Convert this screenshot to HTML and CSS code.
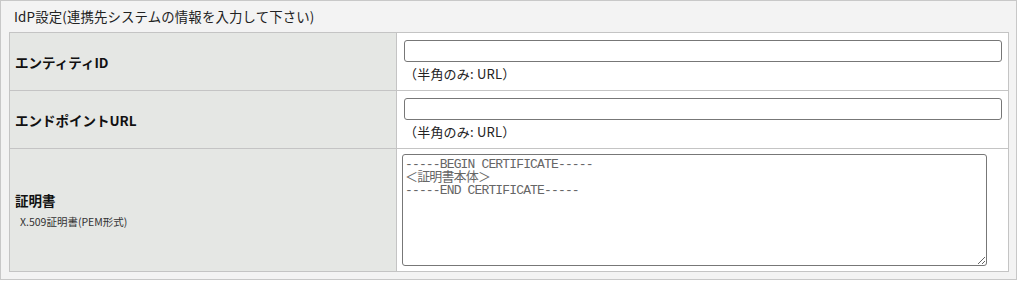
FILE: index.html
```html
<!DOCTYPE html>
<html lang="ja">
<head>
    <meta charset="UTF-8">
    <meta name="viewport" content="width=device-width, initial-scale=1.0">
    <title>IdP設定</title>
    <link rel="stylesheet" href="styles.css">
</head>
<body>
    <div class="panel">
        <div class="panel-title">IdP設定(連携先システムの情報を入力して下さい)</div>
        <table class="form-table">
            <tr>
                <th><span class="label">エンティティID</span></th>
                <td>
                    <input type="text" id="entity-id" name="entity-id">
                    <div class="hint">（半角のみ: URL）</div>
                </td>
            </tr>
            <tr>
                <th><span class="label">エンドポイントURL</span></th>
                <td>
                    <input type="text" id="endpoint-url" name="endpoint-url">
                    <div class="hint">（半角のみ: URL）</div>
                </td>
            </tr>
            <tr>
                <th>
                    <span class="label">証明書</span>
                    <span class="sub">X.509証明書(PEM形式)</span>
                </th>
                <td class="cert-cell">
                    <textarea id="certificate" name="certificate" placeholder="-----BEGIN CERTIFICATE-----&#10;＜証明書本体＞&#10;-----END CERTIFICATE-----"></textarea>
                </td>
            </tr>
        </table>
    </div>
</body>
</html>
```

FILE: styles.css
```css
body {
    margin: 0;
    font-family: "Noto Sans CJK JP", "Noto Sans", sans-serif;
    color: #222;
}

.panel {
    box-sizing: border-box;
    width: 1017px;
    height: 280px;
    border: 1px solid #c8c8c8;
    background: #f3f3f3;
    padding: 0 7px 7px 8px;
}

.panel-title {
    height: 31px;
    line-height: 31px;
    padding-left: 5px;
    font-size: 13.4px;
    letter-spacing: 0.15px;
    color: #222;
}

.form-table {
    width: 1000px;
    table-layout: fixed;
    border-collapse: separate;
    border-spacing: 0;
    border-top: 1px solid #c4c4c4;
    border-left: 1px solid #c4c4c4;
    background: #fff;
}

.form-table th,
.form-table td {
    border-right: 1px solid #c4c4c4;
    border-bottom: 1px solid #c4c4c4;
}

.form-table th {
    width: 376px;
    padding: 0 5px;
    background: #e5e7e4;
    text-align: left;
    vertical-align: middle;
    font-weight: normal;
}

.form-table td {
    padding: 7px 6px 6px 7px;
    vertical-align: top;
}

.label {
    display: block;
    font-size: 13.5px;
    font-weight: bold;
    line-height: 20px;
    color: #111;
}

.sub {
    display: block;
    margin-top: 4px;
    padding-left: 5px;
    font-size: 10.5px;
    line-height: 16px;
    color: #333;
}

.form-table input {
    display: block;
    box-sizing: border-box;
    width: 100%;
    height: 22px;
    margin: 0;
    padding: 1px 4px;
    border: 1px solid #777;
    border-radius: 3px;
    font-size: 13px;
}

.hint {
    margin-top: 2px;
    line-height: 20px;
    font-size: 13px;
    letter-spacing: 0.2px;
    color: #222;
}

.form-table td.cert-cell {
    padding: 5px;
}

.cert-cell textarea {
    display: block;
    box-sizing: border-box;
    width: 585px;
    height: 112px;
    margin: 0;
    padding: 3px 2px;
    border: 1px solid #777;
    border-radius: 3px;
    font-family: "Liberation Mono", "Noto Sans CJK JP", monospace;
    font-size: 13px;
    letter-spacing: -0.85px;
    line-height: 13px;
}

.cert-cell textarea::placeholder {
    color: #666;
    opacity: 1;
}
```
